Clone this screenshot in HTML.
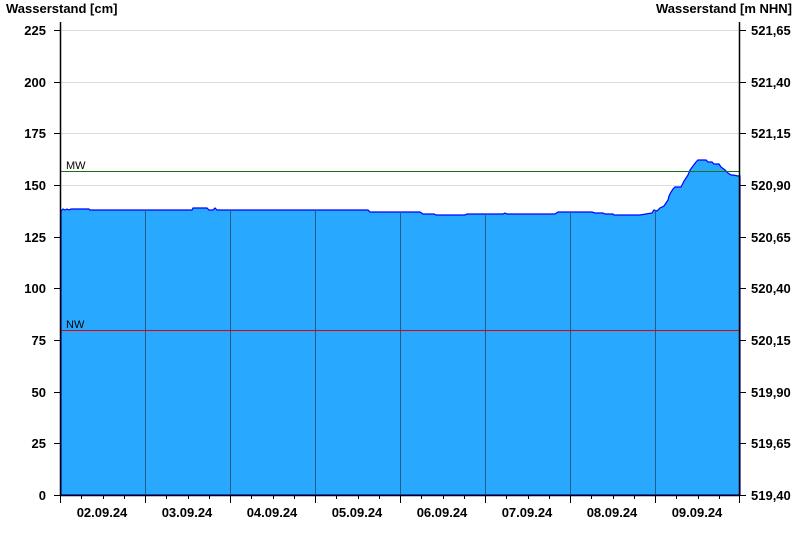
<!DOCTYPE html>
<html><head><style>
html,body{margin:0;padding:0;background:#fff;}
svg{display:block;font-family:"Liberation Sans",Arial,sans-serif;}
</style></head><body>
<svg width="800" height="550" viewBox="0 0 800 550" xmlns="http://www.w3.org/2000/svg">
<rect width="800" height="550" fill="#fff"/>
<text x="6" y="13" font-size="13" font-weight="bold">Wasserstand [cm]</text>
<text x="792" y="13" font-size="13" font-weight="bold" text-anchor="end">Wasserstand [m NHN]</text>
<g stroke="#ddd" stroke-width="1">
<line x1="60" y1="30.5" x2="740" y2="30.5"/>
<line x1="60" y1="82.5" x2="740" y2="82.5"/>
<line x1="60" y1="133.5" x2="740" y2="133.5"/>
<line x1="60" y1="185.5" x2="740" y2="185.5"/>
<line x1="60" y1="237.5" x2="740" y2="237.5"/>
<line x1="60" y1="288.5" x2="740" y2="288.5"/>
<line x1="60" y1="340.5" x2="740" y2="340.5"/>
<line x1="60" y1="392.5" x2="740" y2="392.5"/>
<line x1="60" y1="443.5" x2="740" y2="443.5"/>
</g>
<path d="M61,211 L63,209 L65,210 L67,209 L69,210 L71,209 L73,209 L89,209 L90,210 L192,210 L193,208 L207,208 L209,210 L213,210 L215,208 L217,210 L368,210 L370,212 L420,212 L423,214 L434,214 L436,215 L465,215 L467,214 L503,214 L505,213 L507,214 L555,214 L558,212 L592,212 L595,213 L603,213 L605,214 L613,214 L614,215 L640,215 L652,213 L654,210 L657,211 L660,208 L664,206 L666,203 L668,200 L669,196 L671,192 L673,189 L675,187 L681,187 L684,181 L688,175 L690,170 L693,166 L696,162 L698,160 L706,160 L708,162 L712,162 L714,164 L719,164 L721,167 L725,170 L728,173 L731,175 L733,175 L738,176 L740,176 L740,495 L61,495 Z" fill="#29a8ff" stroke="#0000ff" stroke-width="1.2"/>
<g stroke="#1f5d8a" stroke-width="1">
<line x1="145.5" y1="210" x2="145.5" y2="495"/>
<line x1="230.5" y1="210" x2="230.5" y2="495"/>
<line x1="315.5" y1="210" x2="315.5" y2="495"/>
<line x1="400.5" y1="212" x2="400.5" y2="495"/>
<line x1="485.5" y1="214" x2="485.5" y2="495"/>
<line x1="570.5" y1="212" x2="570.5" y2="495"/>
<line x1="655.5" y1="210" x2="655.5" y2="495"/>
</g>
<line x1="60" y1="171.5" x2="740" y2="171.5" stroke="#1a6e1a" stroke-width="1"/>
<text x="66" y="169" font-size="11">MW</text>
<line x1="60" y1="330.5" x2="740" y2="330.5" stroke="#e00000" stroke-width="1"/>
<text x="66" y="328" font-size="11">NW</text>
<g stroke="#000" stroke-width="1.5">
<line x1="60.5" y1="22" x2="60.5" y2="496"/>
<line x1="739.5" y1="22" x2="739.5" y2="496"/>
<line x1="60" y1="495.5" x2="740" y2="495.5"/>
</g>
<g stroke="#000" stroke-width="1">
<path d="M54,30.5H60M54,82.5H60M54,133.5H60M54,185.5H60M54,237.5H60M54,288.5H60M54,340.5H60M54,392.5H60M54,443.5H60M54,495.5H60"/>
<path d="M740,30.5H746M740,82.5H746M740,133.5H746M740,185.5H746M740,237.5H746M740,288.5H746M740,340.5H746M740,392.5H746M740,443.5H746M740,495.5H746"/>
<path d="M60.5,495V503M145.5,495V503M230.5,495V503M315.5,495V503M400.5,495V503M485.5,495V503M570.5,495V503M655.5,495V503M739.5,495V503"/>
<path d="M81.5,495V499M103.5,495V499M124.5,495V499M166.5,495V499M188.5,495V499M209.5,495V499M251.5,495V499M273.5,495V499M294.5,495V499M336.5,495V499M358.5,495V499M379.5,495V499M421.5,495V499M443.5,495V499M464.5,495V499M506.5,495V499M528.5,495V499M549.5,495V499M591.5,495V499M613.5,495V499M634.5,495V499M676.5,495V499M698.5,495V499M719.5,495V499"/>
</g>
<g font-size="13" font-weight="bold" text-anchor="end">
<text x="46" y="35">225</text><text x="46" y="87">200</text><text x="46" y="138">175</text>
<text x="46" y="190">150</text><text x="46" y="242">125</text><text x="46" y="293">100</text>
<text x="46" y="345">75</text><text x="46" y="397">50</text><text x="46" y="448">25</text><text x="46" y="500">0</text>
</g>
<g font-size="13" font-weight="bold">
<text x="751" y="35">521,65</text><text x="751" y="87">521,40</text><text x="751" y="138">521,15</text>
<text x="751" y="190">520,90</text><text x="751" y="242">520,65</text><text x="751" y="293">520,40</text>
<text x="751" y="345">520,15</text><text x="751" y="397">519,90</text><text x="751" y="448">519,65</text><text x="751" y="500">519,40</text>
</g>
<g font-size="13" font-weight="bold" text-anchor="middle">
<text x="102" y="517">02.09.24</text><text x="187" y="517">03.09.24</text><text x="272" y="517">04.09.24</text>
<text x="357" y="517">05.09.24</text><text x="442" y="517">06.09.24</text><text x="527" y="517">07.09.24</text>
<text x="612" y="517">08.09.24</text><text x="697" y="517">09.09.24</text>
</g>
</svg>
</body></html>
